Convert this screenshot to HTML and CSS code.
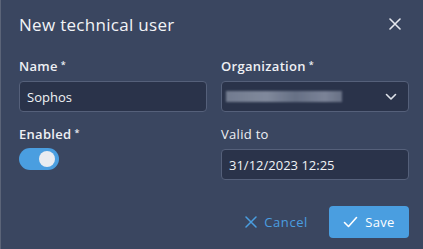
FILE: index.html
```html
<!DOCTYPE html>
<html>
<head>
<meta charset="utf-8">
<link rel="stylesheet" href="styles.css">
</head>
<body>
<div class="dialog">
  <div class="header">
    <h1 class="title">New technical user</h1>
    <button class="close" aria-label="Close">
      <svg width="12" height="12" viewBox="0 0 12 12"><path d="M1 1L11 11M11 1L1 11" stroke="#e6e9ef" stroke-width="1.6" stroke-linecap="round"/></svg>
    </button>
  </div>
  <div class="form">
    <div class="field">
      <label class="label">Name<span class="req">*</span></label>
      <div class="input"><span class="value">Sophos</span></div>
    </div>
    <div class="field">
      <label class="label">Organization<span class="req">*</span></label>
      <div class="input select">
        <span class="redacted"></span>
        <svg class="chev" width="12" height="8" viewBox="0 0 12 8"><path d="M1.5 1.5L6 6L10.5 1.5" fill="none" stroke="#dfe3ea" stroke-width="1.6" stroke-linecap="round" stroke-linejoin="round"/></svg>
      </div>
    </div>
    <div class="field">
      <label class="label">Enabled<span class="req">*</span></label>
      <div class="toggle"><span class="knob"></span></div>
    </div>
    <div class="field">
      <label class="label plain">Valid to</label>
      <div class="input"><span class="value">31/12/2023 12:25</span></div>
    </div>
  </div>
  <div class="footer">
    <button class="btn-cancel">
      <svg width="12" height="12" viewBox="0 0 12 12"><path d="M1 1L11 11M11 1L1 11" stroke="#4a9ee0" stroke-width="1.5" stroke-linecap="round"/></svg>
      <span>Cancel</span>
    </button>
    <button class="btn-save">
      <svg width="15" height="12" viewBox="0 0 15 12"><path d="M1.5 6.5L5.5 10.5L13.5 1.5" fill="none" stroke="#ffffff" stroke-width="1.6" stroke-linecap="round" stroke-linejoin="round"/></svg>
      <span>Save</span>
    </button>
  </div>
</div>
</body>
</html>
```
FILE: styles.css
```css
* { box-sizing: border-box; }
html, body { margin: 0; padding: 0; }
body {
  width: 423px;
  height: 249px;
  background: #3a4660;
  font-family: "Open Sans", "Liberation Sans", sans-serif;
  color: #e8ebf0;
  overflow: hidden;
}
.dialog {
  height: 249px;
  border-left: 1px solid #5b6478;
  padding: 0 14px 0 18px;
  display: flex;
  flex-direction: column;
}
.header {
  display: flex;
  align-items: center;
  justify-content: space-between;
  height: 48px;
}
.title {
  margin: 0;
  font-size: 17px;
  font-weight: 500;
  color: #f2f4f7;
  letter-spacing: 0.3px;
}
.close {
  background: none;
  border: 0;
  padding: 0;
  width: 12px;
  height: 12px;
  margin-right: 8px;
  display: flex;
}
.form {
  display: grid;
  grid-template-columns: 188px 188px;
  column-gap: 14px;
  row-gap: 13px;
  margin-top: 9px;
}
.field {
  display: flex;
  flex-direction: column;
  gap: 6px;
}
.label {
  font-size: 13px;
  font-weight: 600;
  line-height: 18px;
  color: #eef0f4;
  letter-spacing: 0.3px;
}
.label.plain { font-weight: 500; }
.req {
  font-size: 9px;
  vertical-align: top;
  margin-left: 3px;
  position: relative;
  top: -1px;
}
.input {
  height: 31px;
  border: 1px solid #55607a;
  border-radius: 4px;
  background: #2a334a;
  display: flex;
  align-items: center;
  padding: 0 7px;
}
.value {
  font-size: 13px;
  font-weight: 500;
  color: #f0f2f5;
}
.select { justify-content: space-between; padding: 0 11px 0 4px; }
.redacted {
  width: 116px;
  height: 11px;
  background: linear-gradient(90deg, #7a8397 0%, #8a93a5 35%, #6d778c 60%, #848ca0 85%, #6f788c 100%);
  filter: blur(0.8px);
  opacity: 0.9;
}
.toggle {
  width: 40px;
  height: 22px;
  border-radius: 11px;
  background: #4a9ee0;
  display: flex;
  align-items: center;
  justify-content: flex-end;
  padding-right: 4px;
  margin-top: -1px;
}
.knob {
  width: 16px;
  height: 16px;
  border-radius: 50%;
  background: #e9ecf1;
}
.footer {
  display: flex;
  justify-content: flex-end;
  align-items: center;
  gap: 21px;
  margin-top: 26px;
}
.btn-cancel {
  background: none;
  border: 0;
  padding: 0;
  display: flex;
  align-items: center;
  gap: 7px;
  font-family: inherit;
  font-size: 13px;
  font-weight: 500;
  color: #4a9ee0;
  letter-spacing: 0.6px;
}
.btn-save {
  width: 80px;
  height: 32px;
  border: 0;
  border-radius: 4px;
  background: #4a9ee0;
  display: flex;
  align-items: center;
  justify-content: center;
  gap: 7px;
  font-family: inherit;
  font-size: 13px;
  font-weight: 500;
  color: #ffffff;
  letter-spacing: 0.3px;
}
```
